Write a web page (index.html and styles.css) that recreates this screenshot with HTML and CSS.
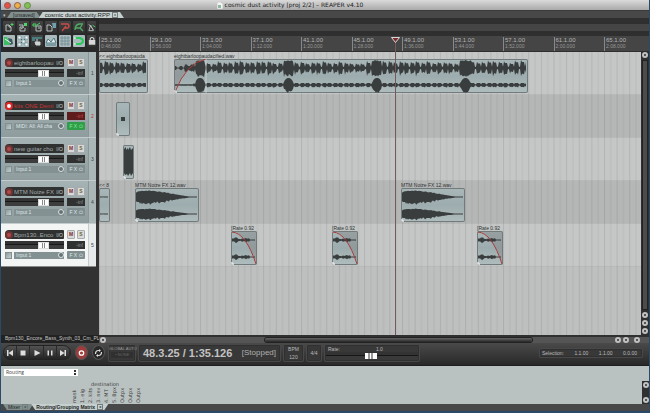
FILE: index.html
```html
<!DOCTYPE html>
<html lang="en">
<head>
<meta charset="utf-8">
<title>cosmic dust activity [proj 2/2] – REAPER v4.10</title>
<link rel="stylesheet" href="styles.css">
</head>
<body>
<div class="window">
  <header class="titlebar">
    <div class="lights">
      <button class="light close" aria-label="Close"></button>
      <button class="light minimise" aria-label="Minimise"></button>
      <button class="light maximise" aria-label="Zoom"></button>
    </div>
    <div class="title">
      <svg width="6" height="7" viewBox="0 0 6 7"><path d="M0 0h4l2 2v5H0z" fill="#f4f4f4" stroke="#aaa" stroke-width=".5"/><path d="M1 3h3v3H1z" fill="#8fb9a4"/></svg>
      <span>cosmic dust activity [proj 2/2] – REAPER v4.10</span>
    </div>
  </header>

  <nav class="tabs project-tabs">
    <span class="caret">▾</span>
    <a class="tab" href="#unsaved"><span>[unsaved]</span></a>
    <a class="tab active" href="#cosmic"><span>cosmic dust activity.RPP</span><span class="x">x</span></a>
  </nav>

  <div class="workspace">
    <aside class="left">
      <div class="toolbar">
        <button aria-label="New project"><svg viewBox="0 0 12 12"><path d="M3 4h3l2 2v4H3zM6 4v2h2" class="ln"/><path d="M9 2v3M7.500 3.500h3" class="gn"/></svg></button>
        <button aria-label="Open project"><svg viewBox="0 0 12 12"><path d="M2 4h4v2H3v4h5V7M4 8l3-2" class="ln"/><path d="M7 2h3v3H7z" fill="#4fd267"/></svg></button>
        <button aria-label="Save project"><svg viewBox="0 0 12 12"><path d="M5 5h5v5H5zM7 7h2" class="ln"/><path d="M2 3h3v2H2zM6 4l3-2" class="gn"/></svg></button>
        <button aria-label="Project settings"><svg viewBox="0 0 12 12"><path d="M2 4h3l2 2v4H2z" class="ln"/><path d="M7 2h4v5H8z" fill="#6fa0ae"/></svg></button>
        <button aria-label="Undo"><svg viewBox="0 0 12 12"><path d="M2 3h7q2 2 0 4H5M7 5L3 10" fill="none" stroke="#c94c48" stroke-width="1.300"/></svg></button>
        <button aria-label="Redo"><svg viewBox="0 0 12 12"><path d="M10 3H6Q2 4 2 9M2 7h5l3 3M7 7l2-3" fill="none" stroke="#4fae63" stroke-width="1.300"/></svg></button>
        <button aria-label="Metronome"><svg viewBox="0 0 12 12"><path d="M2 10l2-6 3 6zM2 3l5 6" class="ln"/><path d="M6 4l3 2" class="gn"/></svg></button>
        <button class="on" aria-label="Auto crossfade"><svg viewBox="0 0 12 12"><path d="M1 2h3l3 8H1z" fill="#3bbf62"/><path d="M5 3l4 1 1 5-3 1z" fill="#39595e"/><path d="M2 4l6 4" stroke="#e8fff0"/></svg></button>
        <button class="on" aria-label="Item grouping"><svg viewBox="0 0 12 12"><path d="M2 2l8 8M10 2l-8 8" stroke="#3c6a70" /><path d="M1 1h3v3H1zM8 1h3v3H8zM1 8h3v3H1zM8 8h3v3H8zM5 5h3v3H5z" fill="#eef4f4" stroke="#567f85" stroke-width=".5"/></svg></button>
        <button aria-label="Ripple editing"><svg viewBox="0 0 12 12"><path d="M1 3h10M1 5h3" stroke="#4e8f91" stroke-width="1.500"/><path d="M6 4v3M4 7h5v3H5z" fill="#cdd2d2" stroke="#cdd2d2"/></svg></button>
        <button class="on" aria-label="Envelopes"><svg viewBox="0 0 12 12"><path d="M1 8l2-4 3 3 3-4 2 5z" fill="#e8eeee" stroke="#4c7c83"/><path d="M1 10h10" stroke="#4c7c83"/></svg></button>
        <button class="on" aria-label="Grid lines"><svg viewBox="0 0 12 12"><path d="M3 1v10M6 1v10M9 1v10M1 3h10M1 6h10M1 9h10" stroke="#688a90" stroke-width=".7"/></svg></button>
        <button class="on" aria-label="Snap"><svg viewBox="0 0 12 12"><path d="M2 3h5q3 1 3 3T7 9H2" fill="none" stroke="#28c95a" stroke-width="2"/><path d="M2 2v2M2 8v2" stroke="#fff"/></svg></button>
        <button aria-label="Lock"><svg viewBox="0 0 12 12"><path d="M2 5h7v5H2z" fill="#d8d8d8"/><path d="M3.500 5V3.500q2-2.500 4 0V5" fill="none" stroke="#d8d8d8" stroke-width="1.200"/></svg></button>
      </div>
      <div class="tracks" id="tracks"></div>
      <div class="hint">Bpm130_Encore_Bass_Synth_03_Cm_PL</div>
    </aside>

    <main class="arrange">
      <div class="region-lane"></div>
      <div class="ruler" id="ruler"></div>
      <div class="canvas-row">
        <div class="lanes" id="lanes">
          <svg class="grid" width="100%" height="100%">
            <defs><pattern id="gridlines" width="12.625" height="20" patternUnits="userSpaceOnUse">
              <path d="M0 0h1v20h-1z" fill="#000" opacity=".09"/><path d="M6.300 0h1v20h-1z" fill="#000" opacity=".06"/>
            </pattern></defs>
            <rect width="100%" height="100%" fill="url(#gridlines)"/>
          </svg>
        </div>
        <div class="vscroll"><button class="knob" aria-label="Scroll up"></button><div class="thumb"></div><button class="knob" aria-label="Scroll down"></button><button class="knob" aria-label="Zoom in"></button><button class="knob" aria-label="Zoom out"></button></div>
      </div>
      <div class="playhead"><svg width="9" height="6" viewBox="0 0 9 6"><path d="M.5.5h8L4.500 5.500z" fill="#7d2b2b" stroke="#d8d8d8"/></svg></div>
      <div class="hscroll"><button class="knob" aria-label="Scroll left"></button><div class="rail"><div class="thumb"></div></div><button class="knob" aria-label="Scroll right"></button><button class="knob" aria-label="Zoom in"></button><button class="knob last" aria-label="Zoom out"></button></div>
    </main>
  </div>

  <section class="transport">
    <div class="pill">
      <button aria-label="Go to start"><svg viewBox="0 0 10 10"><path d="M2 2h1.500v6H2zM8 2v6L3.500 5z"/></svg></button>
      <button aria-label="Stop"><svg viewBox="0 0 10 10"><path d="M2.500 2.500h5v5h-5z"/></svg></button>
      <button aria-label="Play"><svg viewBox="0 0 10 10"><path d="M2.500 2l6 3-6 3z"/></svg></button>
      <button aria-label="Pause"><svg viewBox="0 0 10 10"><path d="M2.500 2.500H4v5H2.500zM6 2.500h1.500v5H6z"/></svg></button>
      <button aria-label="Go to end"><svg viewBox="0 0 10 10"><path d="M6.500 2H8v6H6.500zM2 2v6l4.500-3z"/></svg></button>
    </div>
    <button class="round rec" aria-label="Record"><svg viewBox="0 0 10 10"><circle cx="5" cy="5" r="2.200" fill="none" stroke="#fff" stroke-width="1.300"/></svg></button>
    <button class="round" aria-label="Repeat"><svg viewBox="0 0 10 10"><path d="M2 6q0-3.500 3-3.500h1M8 4q0 3.500-3 3.500H4" fill="none" stroke="#ddd" stroke-width="1.200"/><path d="M5.500 1l2 1.500-2 1.500zM4.500 6l-2 1.500 2 1.500z"/></svg></button>
    <div class="box auto"><span>GLOBAL AUTO</span><button>⌁ NONE</button></div>
    <div class="box time"><output>48.3.25 / 1:35.126</output><span>[Stopped]</span></div>
    <div class="box bpm"><span>BPM</span><span>120</span></div>
    <div class="box sig">4/4</div>
    <div class="box rate">
      <div class="rate-head"><label for="rate">Rate:</label><span>1.0</span></div>
      <input type="range" id="rate" min="0" max="100" value="49">
    </div>
    <div class="box selection"><span>Selection:</span><span>1.1.00</span><span>1.1.00</span><span>0.0.00</span></div>
  </section>

  <section class="dock">
    <div class="dock-main">
      <div class="picker"><select aria-label="Matrix view"><option>Routing</option></select><span class="arrows"><i></i><i></i></span></div>
      <div class="matrix">
        <div class="dest">destination</div>
        <div class="cols"><span>mask</span><span>1. eig</span><span>2. kits</span><span>3. nev</span><span>4. MT</span><span>5. Bpx</span><span>Outpx</span><span>Outpx</span><span>Outpx</span></div>
      </div>
    </div>
    <div class="dock-scroll"><button class="knob" aria-label="Scroll up"></button><button class="knob" aria-label="Scroll down"></button></div>
  </section>
  <nav class="tabs dock-tabs">
    <a class="tab" href="#mixer"><span>Mixer</span><span class="x">x</span></a>
    <a class="tab active" href="#routing"><span>Routing/Grouping Matrix</span><span class="x">x</span></a>
  </nav>
</div>
<script src="app.js"></script>
</body>
</html>
```
FILE: app.js
```js
const PX_PER_BAR = 12.625;
const FIRST_BAR = 25;
const CLIP_HEIGHT = 34;

const tracks = [
  { name: 'eightbarloopau', input: 'Input 1', clips: [
    { x: 0, w: 49, label: '<< eightbarloopauda', wave: 'loop', loud: true },
    { x: 75, w: 354, label: 'eightbarloopaudacified.wav', wave: 'loop', fade: 'in' } ] },
  { name: 'kits ONE Demi', input: 'MIDI: All: All cha', armed: true, clips: [
    { x: 17, w: 14, label: '', wave: 'midi' } ] },
  { name: 'new guitar cho', input: 'Input 1', clips: [
    { x: 24, w: 11, label: '', wave: 'solid' } ] },
  { name: 'MTM Noize FX', input: 'Input 1', clips: [
    { x: 0, w: 11, label: '<< 8', wave: 'flat' },
    { x: 36, w: 64, label: 'MTM Noize FX 12.wav', wave: 'decay' },
    { x: 302, w: 64, label: 'MTM Noize FX 12.wav', wave: 'decay' } ] },
  { name: 'Bpm130..Enco', input: 'Input 1', selected: true, clips: [
    { x: 132, w: 26, label: '[Rate 0.92', wave: 'thin', fade: 'out' },
    { x: 233, w: 26, label: '[Rate 0.92', wave: 'thin', fade: 'out' },
    { x: 378, w: 26, label: '[Rate 0.92', wave: 'thin', fade: 'out' } ] }
];

// Repeatable noise in 0..1 for a pixel column.
const noise = n => { const s = Math.sin(n * 127.1) * 43758.5453; return s - Math.floor(s); };

// Envelope height of a column, for the upper (0) or lower (1) channel.
function level(clip, i, channel) {
  const t = i / clip.w;
  if (clip.wave === 'loop') {
    const hit = (i - 26 + 885) % 88.5;
    const near = Math.min(hit, 88.5 - hit);
    if (!clip.loud && near < 5) return channel ? 7 * Math.sqrt(1 - near * near / 26) : 6.5 + 1.5 * noise(i);
    const beat = i % 5.5;
    const strength = 4.5 + 3.5 * noise(Math.floor(i / 5.5) + 3);
    if (!clip.loud && i < 20) return channel ? .7 : (beat < 3 ? 2 : .6) + (i > 10 ? 1.5 : 0);
    if (channel) return beat < 4 ? 2 : .7;
    return beat < 1 ? strength : beat < 4 ? strength * .75 : 1.2;
  }
  if (clip.wave === 'decay') {
    const body = t < .1 ? 4 + 20 * t : 6.2 * Math.pow(Math.max(0, Math.cos((t - .1) * 1.9)), 1.3);
    return Math.max(.4, (t > .85 ? 0 : body) * (channel ? .8 : 1) + (t < .6 ? noise(i) - .3 : 0));
  }
  if (clip.wave === 'thin') return t < .12 ? 1.4 : t < .25 ? 2.6 : t < .7 ? .7 + 1.3 * noise(i) : .6;
  return .4;
}

function channelPath(clip, channel) {
  const mid = channel ? 26 : 9;
  let top = '', bottom = '';
  for (let i = 1; i < clip.w - 1; i++) {
    const up = level(clip, i, channel);
    const down = up * (.8 + .4 * noise(i + 50));
    top += `L${i} ${(mid - up).toFixed(1)}`;
    bottom = `L${i} ${(mid + down).toFixed(1)}` + bottom;
  }
  return `M1 ${mid}${top}${bottom}Z`;
}

function clipArt(clip) {
  const w = clip.w, h = CLIP_HEIGHT;
  let art = '';
  if (clip.fade === 'in') art += `<path d="M0 33Q12 4 32 0H0Z" class="shade"/>`;
  if (clip.fade === 'out') art += `<path d="M2 0Q16 4 ${w} ${h}V0Z" class="shade"/>`;
  if (clip.wave === 'midi') art += '<path d="M5 15h4v4H5z" class="wave"/>';
  else if (clip.wave === 'solid') art += '<path d="M1 4l2-2v3l2-2v2l2-3 1 3 2-2v25l-2 3-1-3-2 3-1-2-2 1-1-2z" class="wave"/>';
  else art += `<path d="${channelPath(clip, 0)}" class="wave"/><path d="${channelPath(clip, 1)}" class="wave"/>`;
  if (clip.fade === 'in') art += '<path d="M1 33Q12 4 32 0" class="curve"/><path d="M32 0v34" stroke="#e3e8e8" stroke-width=".6"/>';
  if (clip.fade === 'out') art += `<path d="M1 1Q15 2 ${w - 1} ${h - 1}" class="curve"/>`;
  if (clip.x > 0) art += `<path d="M0 ${h - 3}q3 0 3 3H0z" fill="#fff" opacity=".7"/>`;
  return `<svg width="${w}" height="${h}" viewBox="0 0 ${w} ${h}">${art}</svg>`;
}

document.getElementById('tracks').innerHTML = tracks.map((t, i) => `
  <div class="track ${t.armed ? 'armed' : ''} ${t.selected ? 'selected' : ''}">
    <div class="controls">
      <div class="namebar"><button class="arm" aria-label="Record arm track ${i + 1}"></button><input class="name" aria-label="Track ${i + 1} name" value="${t.name}"><button class="io">I/O</button></div>
      <div class="pair"><button class="m">M</button><button class="s">S</button></div>
      <input type="range" class="fader" aria-label="Volume of track ${i + 1}" value="68">
      <div class="meter">-inf</div>
      <div class="inputbar"><button class="env" aria-label="Envelope"></button><select aria-label="Input of track ${i + 1}"><option>${t.input}</option></select><span class="pan"></span></div>
      <button class="fx">F X ⏻</button>
    </div>
    <div class="index"><span>${i + 1}</span></div>
  </div>`).join('');

document.getElementById('lanes').insertAdjacentHTML('afterbegin', tracks.map(t => `
  <div class="lane">${t.clips.map(c => `
    <div class="clip" style="left:${c.x}px;width:${c.w}px"><span>${c.label}</span><div class="body">${clipArt(c)}</div></div>`).join('')}
  </div>`).join(''));

document.getElementById('ruler').innerHTML = Array.from({ length: 11 }, (_, i) => {
  const bar = FIRST_BAR + i * 4;
  const seconds = (bar - 1) * 2;
  const stamp = Math.floor(seconds / 60) + ':' + String(seconds % 60).padStart(2, '0') + '.000';
  return `<div class="mark" style="left:${i * 4 * PX_PER_BAR}px"><span>${bar}.1.00</span><span>${stamp}</span></div>`;
}).join('');
```
FILE: styles.css
```css
* { box-sizing: border-box; }

body {
  margin: 0;
  background: #27456b;
  font-family: "Liberation Sans", Arial, sans-serif;
  font-size: 5px;
  line-height: 6px;
  color: #bbb;
}

button, input, select {
  margin: 0;
  padding: 0;
  border: 0;
  font: inherit;
  color: inherit;
  background: none;
  appearance: none;
  min-width: 0;
}

a { color: inherit; text-decoration: none; }
svg { display: block; }

.window {
  display: flex;
  flex-direction: column;
  height: 100vh;
  border: solid #2b4968;
  border-width: 0 1px 2px;
  background: #2e2e2e;
}

/* Title bar */
.titlebar {
  display: flex;
  align-items: center;
  height: 10px;
  flex: none;
  padding-left: 8px;
  background: linear-gradient(#dadada, #a9a9a9);
}
.lights { display: flex; gap: 3px; margin-left: -5px; }
.light { width: 7px; height: 7px; border-radius: 50%; border: 1px solid #8a5a50; }
.close { background: #e65249; }
.minimise { background: #efb146; }
.maximise { background: #84bf55; border-color: #628c49; }
.title {
  display: flex;
  flex: 1;
  align-items: center;
  justify-content: center;
  gap: 2px;
  padding-right: 100px;
  font-family: "DejaVu Sans", sans-serif;
  font-size: 6px;
  line-height: 8px;
  color: #1a1a1a;
}

/* Tabs */
.tabs { display: flex; align-items: flex-end; flex: none; background: #484848; color: #252525; }
.project-tabs { height: 8px; padding-left: 2px; border-top: 1px solid #3b3b3b; }
.project-tabs .caret { color: #bbb; width: 4px; }
.tab {
  display: flex;
  align-items: center;
  gap: 2px;
  height: 6px;
  padding: 0 6px;
  background: #81908f;
  clip-path: polygon(4px 0, calc(100% - 4px) 0, 100% 100%, 0 100%);
  white-space: nowrap;
}
.tab.active { background: #c5d0cf; margin-left: -2px; }
.project-tabs .tab.active { font-size: 6px; }
.tab .x { font-size: 4px; line-height: 4px; padding: 0 1px; border: 1px solid #747e7e; }
.dock-tabs { height: 7px; align-items: flex-start; padding-left: 2px; }
.dock-tabs .tab { padding: 0 5px; clip-path: polygon(0 0, 100% 0, calc(100% - 4px) 100%, 4px 100%); }
.dock-tabs .active { font-weight: bold; }

/* Workspace */
.workspace { display: flex; flex: 1; min-height: 0; }
.left { display: flex; flex-direction: column; flex: none; width: 98px; overflow: hidden; background: #323232; }

.toolbar {
  display: grid;
  grid-template-columns: repeat(6, 12px) 9px;
  grid-auto-rows: 12px;
  gap: 2px;
  height: 34px;
  flex: none;
  padding: 3px 0 0 2px;
  background: #292929;
}
.toolbar button { border-radius: 1px; background: linear-gradient(#444, #303030); overflow: hidden; }
.toolbar button.on { background: #a9b9bc; }
.toolbar svg { width: 12px; height: 12px; }
.toolbar button:nth-child(7n) svg { width: 11px; }
.ln { fill: none; stroke: #b8bfbf; }
.gn { fill: none; stroke: #4fd267; }

.tracks { flex: 1; margin-right: 3px; min-height: 0; }
.track {
  display: flex;
  height: 43px;
  border-bottom: 1px solid #c3cccc;
  background: linear-gradient(#a6b3b4, #8e9c9e);
  color: #dfe6e6;
}
.controls {
  display: grid;
  flex: 1;
  min-width: 0;
  grid-template-columns: minmax(0, 1fr) 18px;
  grid-template-rows: 9px 8px 8px;
  gap: 2px 3px;
  align-content: start;
  padding: 6px 3px 0 4px;
}
.namebar { display: flex; align-items: center; min-width: 0; background: #303232; border-radius: 4px 1px 1px 4px; }
.arm { flex: none; width: 8px; height: 8px; border: 2px solid #6d3434; border-radius: 50%; background: #b04a4a; }
.name { flex: 1; width: 0; padding-left: 1px; line-height: 8px; font-size: 6px; color: #a4aaaa; }
.io { flex: none; padding: 0 1px; color: #c5cbcb; }
.pair { display: grid; grid-template-columns: 1fr 1fr; gap: 2px; }
.pair button { border: 1px solid #aaa; border-radius: 1px; background: #d7dada; font-weight: bold; line-height: 7px; color: #7f2727; }
.pair .s { color: #6e6437; }
.fader { width: 100%; height: 8px; background: linear-gradient(#333 3px, #191919 3px, #191919 4px, #3d3d3d 4px); }
.fader::-webkit-slider-thumb {
  appearance: none;
  width: 11px;
  height: 7px;
  border: 1px solid #ddd;
  background: linear-gradient(90deg, #fff 3px, #888 3px, #888 4px, #fff 4px, #fff 5px, #888 5px, #888 6px, #fff 6px);
}
.meter { background: #303232; text-align: right; padding: 1px 2px; color: #8f9595; }
.inputbar { display: flex; align-items: center; gap: 2px; min-width: 0; }
.env { width: 7px; height: 7px; flex: none; border: 1px solid #829092; background: linear-gradient(135deg, #8e9c9e, #c5cfcf); }
.inputbar select { flex: 1; height: 7px; padding-left: 2px; background: #839193; font-size: 5px; }
.pan { flex: none; width: 6px; height: 6px; margin-left: -8px; border: 1px solid #dbe2e2; border-radius: 50%; background: #647274; }
.fx { border-radius: 1px; background: #7f8d8f; white-space: nowrap; }
.index {
  display: flex;
  align-items: center;
  justify-content: center;
  width: 8px;
  border-left: 1px solid #88979a;
  background: #abb6b6;
  color: #444;
}
.armed .arm { background: #fff; border-color: #e02525; }
.armed .name { color: #c83232; }
.armed .meter { background: #5e1c1c; color: #c04848; }
.armed .fx { background: #2f9e48; color: #8fe8a0; }
.armed .index { color: #b33; }
.selected { background: #f3f5f5; border-bottom-color: #888; }
.selected .index { background: #e6eaea; border-color: #c6cccc; }

.hint { flex: none; height: 8px; padding: 0 1px 0 4px; line-height: 7px; background: #222; color: #c4c4c4; white-space: nowrap; overflow: hidden; }

/* Timeline */
.arrange { position: relative; display: flex; flex-direction: column; flex: 1; min-width: 0; }
.region-lane { flex: none; height: 18px; border: solid #2f2f2f; border-width: 6px 0 5px; background: #454545; }
.ruler { position: relative; flex: none; height: 16px; overflow: hidden; background: #454545; border-bottom: 1px solid #2e2e2e; }
.mark { position: absolute; top: 1px; display: flex; flex-direction: column; padding-left: 1px; border-left: 1px solid #888; height: 14px; font-size: 6px; color: #b4b4b4; }
.mark span + span { color: #979797; font-size: 5px; }

.canvas-row { display: flex; flex: 1; min-height: 0; }
.lanes { position: relative; flex: 1; overflow: hidden; background: #bec0bf; }
.lane { position: relative; height: 43px; background: #c4c7c6; border-bottom: 1px solid #b8bab9; }
.lane:nth-child(even) { background: #b5b7b6; }
.grid { position: absolute; inset: 0; }
.clip { position: absolute; top: 1px; z-index: 1; color: #303434; }
.clip span { display: block; height: 6px; white-space: nowrap; }
.clip .body { height: 34px; border-radius: 2px; overflow: hidden; background: linear-gradient(#a9b7b9, #9dacae 50%, #b0bdbe); box-shadow: inset 0 0 0 1px #717b7c; }
.wave { fill: #3a3d3d; }
.shade { fill: #777; opacity: .35; }
.curve { fill: none; stroke: #a83b3b; }

.playhead { position: absolute; z-index: 2; top: 19px; bottom: 8px; left: 292px; width: 9px; background: linear-gradient(#745a5a, #745a5a) 4px 0 / 1px 100% no-repeat; }

.vscroll { display: flex; flex-direction: column; align-items: center; gap: 2px; width: 8px; padding-bottom: 1px; background: #303030; }
.vscroll .thumb { flex: 1; width: 6px; background: #4c4c4c; border: 1px solid #222; }
.knob { flex: none; width: 6px; height: 6px; border: 2px solid #c2c2c2; border-radius: 50%; background: #333; }
.hscroll { display: flex; align-items: center; gap: 2px; flex: none; height: 8px; padding: 0 9px 0 1px; background: #555; border-top: 2px solid #303030; }
.rail { flex: 1; height: 6px; padding: 1px 15% 0 29%; }
.hscroll .thumb { height: 4px; border-radius: 2px; background: linear-gradient(#666, #262626); box-shadow: 0 0 0 1px #222; }
.hscroll .last { margin-left: 3px; }

/* Transport */
.transport {
  display: flex;
  align-items: flex-start;
  gap: 4px;
  flex: none;
  height: 23px;
  padding: 2px 7px 0 2px;
  background: linear-gradient(#4a4a4a, #292929);
  border-bottom: 1px solid #1d1d1d;
}
.transport svg { width: 10px; height: 10px; margin: auto; fill: #ddd; }
.pill { display: flex; flex: none; width: 68px; height: 15px; border: 1px solid #222; border-radius: 8px; overflow: hidden; background: linear-gradient(#525252, #242424); }
.pill button { flex: 1; border-right: 1px solid #292929; }
.round { flex: none; width: 13px; height: 15px; border-radius: 50%; border: 1px solid #555; background: #292929; }
.rec { background: #9d3c3b; }
.round svg { width: 100%; height: 10px; }
.box { flex: none; height: 16px; border: 1px solid #303030; border-radius: 1px; background: #383838; box-shadow: 0 0 0 1px #484848; }
.auto { display: flex; flex-direction: column; width: 26px; font-size: 4px; line-height: 6px; text-align: center; white-space: nowrap; color: #999; }
.auto span { margin: 0 -1px; }
.auto button { color: #666; background: #303030; margin: 0 1px; }
.time { display: flex; align-items: center; justify-content: space-between; width: 141px; padding: 0 3px; }
.time output { font-size: 11px; line-height: 14px; font-weight: bold; color: #c2c2c2; white-space: nowrap; }
.time span { font-size: 8px; color: #b0b0b0; }
.bpm { display: flex; flex-direction: column; align-items: center; justify-content: space-between; width: 19px; }
.sig { width: 14px; text-align: center; line-height: 14px; }
.rate { width: 94px; }
.rate-head { display: flex; gap: 36px; padding-left: 2px; }
.rate input { display: block; width: 100%; height: 7px; background: linear-gradient(#333 3px, #161616 3px, #161616 4px, #3a3a3a 4px); }
.rate input::-webkit-slider-thumb { appearance: none; width: 12px; height: 6px; background: linear-gradient(90deg, #fff 3px, #999 3px, #999 5px, #fff 5px, #fff 6px, #999 6px, #999 8px, #fff 8px); }
.selection { display: flex; height: 8px; width: 102px; justify-content: space-between; margin: 4px 0 0 auto; padding: 0 4px 0 1px; }

/* Docked matrix */
.dock { display: flex; align-items: flex-end; flex: none; height: 38px; background: #bac2c1; color: #3a3e3e; }
.dock-main { flex: 1; align-self: stretch; padding: 3px 0 0 3px; }
.picker { display: flex; align-items: center; width: 74px; height: 7px; padding-right: 2px; background: #fff; font-family: "Open Sans", sans-serif; }
.picker select { flex: 1; height: 7px; padding-left: 2px; line-height: 7px; }
.arrows { display: grid; gap: 1px; }
.arrows i { width: 2px; height: 2px; background: #333; }
.matrix { padding: 5px 0 0 67px; font-family: "DejaVu Sans", sans-serif; }
.dest { padding-left: 20px; font-size: 5px; height: 6px; }
.cols { display: flex; gap: 1px; }
.cols span { writing-mode: vertical-rl; transform: rotate(180deg); height: 16px; width: 7px; line-height: 7px; white-space: nowrap; }
.dock-scroll { display: flex; flex-direction: column; justify-content: space-between; align-items: center; width: 7px; height: 23px; padding: 1px 0; background: #303030; }
```
